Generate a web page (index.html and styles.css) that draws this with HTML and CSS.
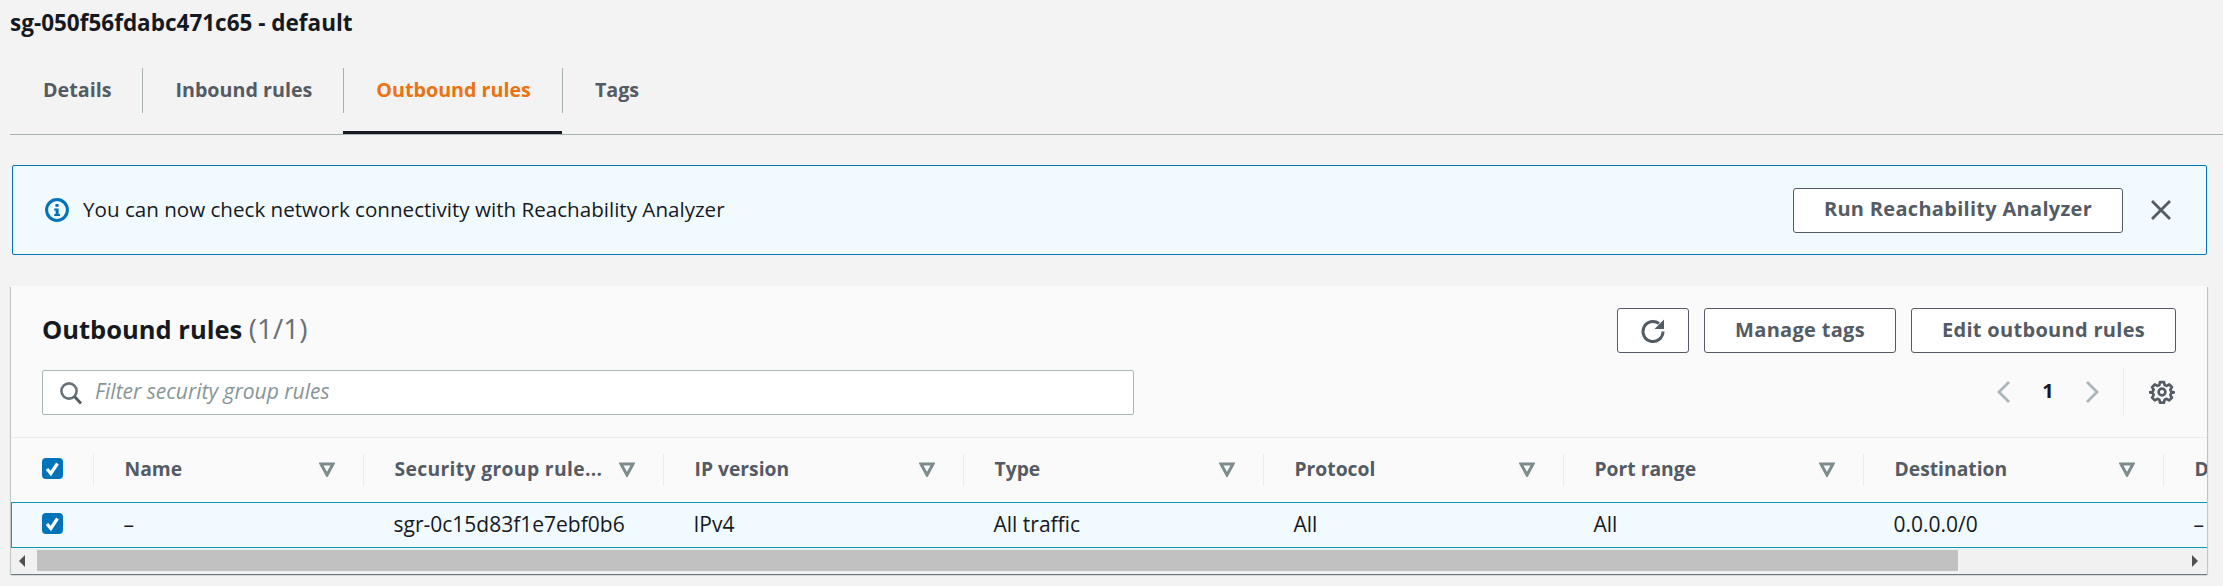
FILE: index.html
```html
<!DOCTYPE html>
<html lang="en">
<head>
  <meta charset="UTF-8" />
  <title>Security group</title>
  <link rel="stylesheet" href="styles.css">
</head>
<body>

  <h1 class="page-title">sg-050f56fdabc471c65 - default</h1>

  <nav class="tabs">
    <a class="tab" href="#details"><span>Details</span></a>
    <a class="tab" href="#inbound"><span>Inbound rules</span></a>
    <a class="tab tab-active" href="#outbound"><span>Outbound rules</span></a>
    <a class="tab" href="#tags"><span>Tags</span></a>
  </nav>

  <div class="alert">
    <svg class="alert-icon" width="24" height="24" viewBox="0 0 24 24">
      <circle cx="12" cy="12" r="10.4" fill="none" stroke="#0073bb" stroke-width="3"/>
      <rect x="10.4" y="6" width="3.2" height="2.8" fill="#0073bb"/>
      <path d="M9.2 10.4h4.4v5.6h1.4v2H9.2v-2h1.4v-3.6H9.2z" fill="#0073bb"/>
    </svg>
    <span class="alert-text">You can now check network connectivity with Reachability Analyzer</span>
    <button class="btn btn-run">Run Reachability Analyzer</button>
    <svg class="alert-close" width="22" height="22" viewBox="0 0 22 22">
      <path d="M2 2l18 18M20 2L2 20" fill="none" stroke="#545b64" stroke-width="2.8"/>
    </svg>
  </div>

  <section class="card">
    <div class="card-head">
      <div class="card-left">
        <h2 class="card-title">Outbound rules <span class="count">(1/1)</span></h2>
        <div class="search">
          <svg width="24" height="24" viewBox="0 0 24 24">
            <circle cx="10" cy="10" r="7.6" fill="none" stroke="#687078" stroke-width="2.6"/>
            <path d="M15.5 15.5l6.5 7" fill="none" stroke="#545b64" stroke-width="2.8"/>
          </svg>
          <input type="text" placeholder="Filter security group rules" />
        </div>
      </div>
      <div class="card-right">
        <div class="actions">
          <button class="btn btn-icon" aria-label="Refresh">
            <svg width="26" height="26" viewBox="0 0 26 26">
              <path d="M23 13.5a10 10 0 1 1-4-8" fill="none" stroke="#545b64" stroke-width="3"/>
              <path d="M24 1.5v9.5h-9.5z" fill="#545b64"/>
            </svg>
          </button>
          <button class="btn btn-tags">Manage tags</button>
          <button class="btn btn-edit">Edit outbound rules</button>
        </div>
        <div class="pager">
          <svg width="16" height="24" viewBox="0 0 16 24"><path d="M13 2L3 12l10 10" fill="none" stroke="#aab7b8" stroke-width="2.8"/></svg>
          <span class="page-num">1</span>
          <svg width="16" height="24" viewBox="0 0 16 24"><path d="M3 2l10 10L3 22" fill="none" stroke="#aab7b8" stroke-width="2.8"/></svg>
          <span class="pager-sep"></span>
          <svg class="gear" width="26" height="26" viewBox="0 0 26 26">
            <circle cx="13" cy="13" r="3.4" fill="none" stroke="#545b64" stroke-width="2.6"/>
            <path d="M10.8 2h4.4l.7 3.2 2.2 1 2.9-1.6 3 3-1.7 2.9 1 2.2 3 .7v0l-3 .7-1 2.3 1.7 2.9-3 3-2.900-1.700-2.200 1-.7 3.200h-4.400l-.7-3.200-2.200-1-2.900 1.700-3-3 1.700-2.900-1-2.300-3.100-.7v0l3.100-.7 1-2.200-1.700-2.900 3-3 2.900 1.600 2.200-1z" transform="translate(1.3 1.3) scale(.9)" fill="none" stroke="#545b64" stroke-width="3" stroke-linejoin="round"/>
          </svg>
        </div>
      </div>
    </div>

    <div class="table-wrap">
      <table class="rules">
        <colgroup>
          <col class="col-check"><col class="col-name"><col span="7" class="col-std">
        </colgroup>
        <thead>
          <tr>
            <th><div class="th-in th-check"><span class="check"><svg width="21" height="21" viewBox="0 0 21 21"><path d="M5 11l3.800 4.500L15.500 5.500" fill="none" stroke="#fff" stroke-width="3.2"/></svg></span></div></th>
            <th><div class="th-in"><span class="th-label">Name</span><svg class="sort" width="16" height="15" viewBox="0 0 16 15"><path d="M2 2h12L8 13z" fill="none" stroke="#7f8c8d" stroke-width="3"/></svg></div></th>
            <th><div class="th-in"><span class="th-label th-long">Security group rule...</span><svg class="sort" width="16" height="15" viewBox="0 0 16 15"><path d="M2 2h12L8 13z" fill="none" stroke="#7f8c8d" stroke-width="3"/></svg></div></th>
            <th><div class="th-in"><span class="th-label">IP version</span><svg class="sort" width="16" height="15" viewBox="0 0 16 15"><path d="M2 2h12L8 13z" fill="none" stroke="#7f8c8d" stroke-width="3"/></svg></div></th>
            <th><div class="th-in"><span class="th-label">Type</span><svg class="sort" width="16" height="15" viewBox="0 0 16 15"><path d="M2 2h12L8 13z" fill="none" stroke="#7f8c8d" stroke-width="3"/></svg></div></th>
            <th><div class="th-in"><span class="th-label">Protocol</span><svg class="sort" width="16" height="15" viewBox="0 0 16 15"><path d="M2 2h12L8 13z" fill="none" stroke="#7f8c8d" stroke-width="3"/></svg></div></th>
            <th><div class="th-in"><span class="th-label">Port range</span><svg class="sort" width="16" height="15" viewBox="0 0 16 15"><path d="M2 2h12L8 13z" fill="none" stroke="#7f8c8d" stroke-width="3"/></svg></div></th>
            <th><div class="th-in"><span class="th-label">Destination</span><svg class="sort" width="16" height="15" viewBox="0 0 16 15"><path d="M2 2h12L8 13z" fill="none" stroke="#7f8c8d" stroke-width="3"/></svg></div></th>
            <th><div class="th-in"><span class="th-label">Description</span></div></th>
          </tr>
        </thead>
        <tbody>
          <tr class="selected">
            <td class="td-check"><span class="check"><svg width="21" height="21" viewBox="0 0 21 21"><path d="M5 11l3.800 4.500L15.500 5.500" fill="none" stroke="#fff" stroke-width="3.2"/></svg></span></td>
            <td>–</td>
            <td>sgr-0c15d83f1e7ebf0b6</td>
            <td>IPv4</td>
            <td>All traffic</td>
            <td>All</td>
            <td>All</td>
            <td>0.0.0.0/0</td>
            <td>–</td>
          </tr>
        </tbody>
      </table>
    </div>

    <div class="scrollbar">
      <span class="arrow-left"></span>
      <span class="thumb"></span>
      <span class="arrow-right"></span>
    </div>
  </section>

</body>
</html>
```

FILE: styles.css
```css
* {
  box-sizing: border-box;
}

html, body {
  height: 586px;
  overflow: hidden;
}

body {
  margin: 0;
  background: #f3f3f3;
  font-family: "Open Sans", "Noto Sans", sans-serif;
  font-size: 20.6px;
  color: #16191f;
}

.page-title {
  margin: 0;
  padding-left: 10px;
  height: 46px;
  line-height: 46px;
  font-size: 22.5px;
  font-weight: 700;
}

.tabs {
  display: flex;
  height: 89px;
  margin-left: 10px;
  border-bottom: 1px solid #aab1b2;
}

.tab {
  display: flex;
  align-items: center;
  height: 88px;
  padding: 0 31px 2px 33px;
  text-decoration: none;
  color: #545b64;
  font-weight: 700;
  font-size: 19.7px;
  position: relative;
}

.tab + .tab::before {
  content: "";
  position: absolute;
  left: 0;
  top: 22px;
  height: 45px;
  border-left: 1px solid #aab1b2;
}

.tab-active {
  color: #ec7211;
  box-shadow: inset 0 -3px 0 #16191f;
}

.alert {
  display: flex;
  align-items: center;
  width: 2195px;
  height: 90px;
  margin: 30px 0 0 12px;
  padding: 0 34px 0 32px;
  background: #f1faff;
  border: 1px solid #0073bb;
  border-radius: 2px;
}

.alert-icon {
  margin-right: 14px;
}

.alert-text {
  flex: 1;
  padding-bottom: 2px;
}

.alert-close {
  margin-left: 27px;
}

.btn {
  height: 45px;
  background: #fff;
  border: 1px solid #545b64;
  border-radius: 3px;
  color: #545b64;
  font-family: inherit;
  font-size: 20px;
  font-weight: 700;
  letter-spacing: .3px;
  padding: 0 0 3px;
}

.btn-run {
  width: 330px;
}

.btn-icon {
  width: 72px;
  padding: 0;
  display: flex;
  align-items: center;
  justify-content: center;
}

.btn-tags {
  width: 192px;
}

.btn-edit {
  width: 265px;
}

.card {
  width: 2196px;
  height: 288px;
  margin: 31px 0 0 11px;
  background: #fafafa;
  box-shadow: 0 1px 1px 0 rgba(0, 28, 36, 0.4), 1px 1px 1px 0 rgba(0, 28, 36, 0.15), -1px 1px 1px 0 rgba(0, 28, 36, 0.15);
  overflow: hidden;
}

.card-head {
  display: flex;
  justify-content: space-between;
  height: 152px;
  padding: 20px 31px 0;
  border-bottom: 1px solid #eaeded;
}

.card-title {
  margin: 0 0 20px;
  height: 44px;
  line-height: 44px;
  font-size: 25.5px;
  font-weight: 700;
}

.count {
  font-size: 28px;
  font-weight: 400;
  color: #687078;
}

.search {
  display: flex;
  align-items: center;
  gap: 12px;
  width: 1092px;
  height: 45px;
  padding-left: 16px;
  background: #fff;
  border: 1px solid #aab7b8;
  border-radius: 2px;
}

.search input {
  flex: 1;
  padding: 0 0 3px;
  border: 0;
  outline: 0;
  background: none;
  font-family: inherit;
  font-size: 21px;
  font-style: italic;
}

.search input::placeholder {
  color: #879596;
  opacity: 1;
}

.card-right {
  padding-top: 2px;
}

.actions {
  display: flex;
  gap: 15px;
}

.pager {
  display: flex;
  align-items: center;
  justify-content: flex-end;
  height: 47px;
  margin-top: 15px;
  margin-right: 1px;
}

.page-num {
  width: 72px;
  padding-bottom: 3px;
  text-align: center;
  font-size: 20px;
  font-weight: 700;
}

.pager-sep {
  height: 47px;
  margin: 0 25px 0 23px;
  border-left: 1px solid #eaeded;
}

.table-wrap {
  overflow: hidden;
}

.rules {
  width: 2452px;
  table-layout: fixed;
  border-collapse: collapse;
}

.col-check {
  width: 82px;
}

.col-name {
  width: 270px;
}

.col-std {
  width: 300px;
}

.rules th {
  height: 64px;
  padding: 0;
  text-align: left;
  color: #545b64;
  font-size: 19.3px;
  font-weight: 700;
}

.th-in {
  display: flex;
  align-items: center;
  justify-content: space-between;
  height: 32px;
  padding: 0 28px 0 31px;
  border-right: 1px solid #eaeded;
}

.th-check {
  padding: 0 0 2px 30px;
}

.th-label {
  padding-bottom: 3px;
  white-space: nowrap;
}

.th-long {
  letter-spacing: .35px;
}

.rules td {
  height: 45px;
  padding: 0 0 2px 30px;
  background: #f1faff;
  border-top: 1px solid #0c9bae;
  border-bottom: 1px solid #0c9bae;
  font-size: 21px;
  white-space: nowrap;
}

.rules .td-check {
  padding: 0 0 2px 30px;
  border-left: 1px solid #0c9bae;
}

.check {
  display: block;
  width: 21px;
  height: 21px;
  background: #0073bb;
  border-radius: 4px;
}

.check svg {
  display: block;
}

.scrollbar {
  display: flex;
  align-items: center;
  height: 26px;
  background: #f1f1f1;
}

.arrow-left,
.arrow-right {
  width: 0;
  height: 0;
  border-top: 6px solid transparent;
  border-bottom: 6px solid transparent;
}

.arrow-left {
  margin: 0 12px 0 8px;
  border-right: 6px solid #505050;
}

.arrow-right {
  margin-left: 234px;
  border-left: 6px solid #505050;
}

.thumb {
  width: 1921px;
  height: 21px;
  background: #c1c1c1;
}
```
